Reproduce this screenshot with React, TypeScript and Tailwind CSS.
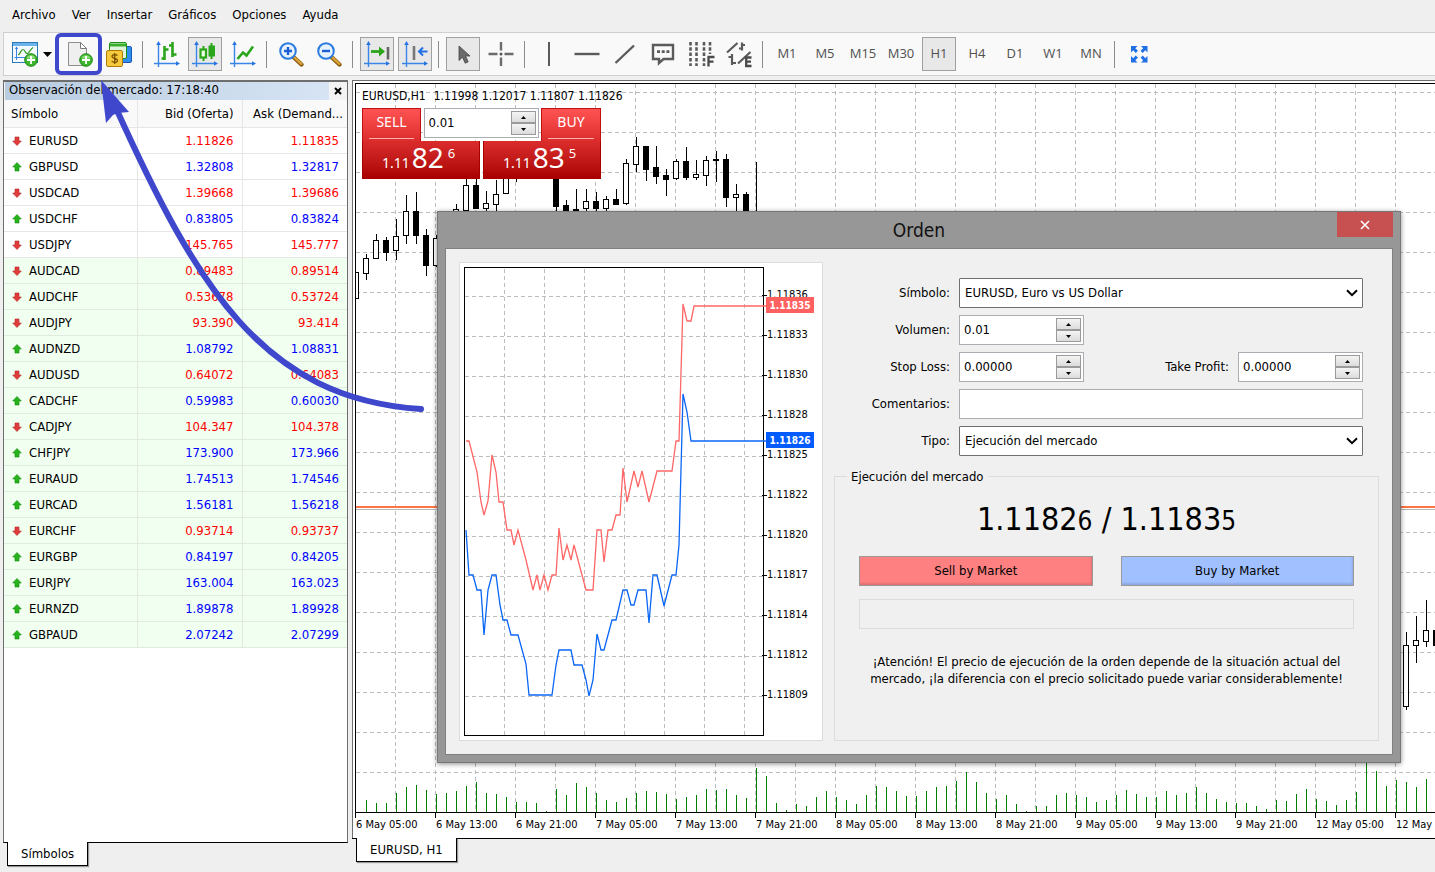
import type { ReactNode } from "react";

const quotes = [
  { symbol: "EURUSD", bid: "1.11826", ask: "1.11835", up: false },
  { symbol: "GBPUSD", bid: "1.32808", ask: "1.32817", up: true },
  { symbol: "USDCAD", bid: "1.39668", ask: "1.39686", up: false },
  { symbol: "USDCHF", bid: "0.83805", ask: "0.83824", up: true },
  { symbol: "USDJPY", bid: "145.765", ask: "145.777", up: false },
  { symbol: "AUDCAD", bid: "0.89483", ask: "0.89514", up: false },
  { symbol: "AUDCHF", bid: "0.53678", ask: "0.53724", up: false },
  { symbol: "AUDJPY", bid: "93.390", ask: "93.414", up: false },
  { symbol: "AUDNZD", bid: "1.08792", ask: "1.08831", up: true },
  { symbol: "AUDUSD", bid: "0.64072", ask: "0.64083", up: false },
  { symbol: "CADCHF", bid: "0.59983", ask: "0.60030", up: true },
  { symbol: "CADJPY", bid: "104.347", ask: "104.378", up: false },
  { symbol: "CHFJPY", bid: "173.900", ask: "173.966", up: true },
  { symbol: "EURAUD", bid: "1.74513", ask: "1.74546", up: true },
  { symbol: "EURCAD", bid: "1.56181", ask: "1.56218", up: true },
  { symbol: "EURCHF", bid: "0.93714", ask: "0.93737", up: false },
  { symbol: "EURGBP", bid: "0.84197", ask: "0.84205", up: true },
  { symbol: "EURJPY", bid: "163.004", ask: "163.023", up: true },
  { symbol: "EURNZD", bid: "1.89878", ask: "1.89928", up: true },
  { symbol: "GBPAUD", bid: "2.07242", ask: "2.07299", up: true },
];

// [slot, high, body top, body bottom, low, filled]
const candles: [number, number, number, number, number, boolean][] = [
  [0, 188, 188, 214, 214, false],
  [1, 170, 174, 189, 196, false],
  [2, 150, 156, 174, 175, false],
  [3, 153, 156, 168, 177, true],
  [4, 135, 152, 166, 176, false],
  [5, 111, 127, 151, 160, false],
  [6, 108, 127, 151, 160, true],
  [7, 145, 151, 181, 192, true],
  [8, 151, 154, 181, 183, false],
  [10, 120, 125, 135, 140, false],
  [11, 80, 101, 126, 130, false],
  [12, 80, 101, 124, 124, true],
  [13, 107, 119, 124, 130, false],
  [14, 96, 110, 120, 130, false],
  [15, 80, 86, 109, 109, false],
  [16, 70, 80, 92, 98, true],
  [17, 70, 80, 92, 94, true],
  [18, 70, 80, 92, 94, true],
  [20, 80, 84, 122, 127, true],
  [21, 116, 121, 126, 130, true],
  [22, 105, 125, 135, 135, true],
  [23, 105, 117, 124, 130, false],
  [24, 108, 117, 124, 130, true],
  [25, 112, 115, 124, 130, false],
  [26, 105, 115, 120, 121, true],
  [27, 75, 79, 119, 121, false],
  [28, 53, 62, 80, 88, false],
  [29, 62, 62, 85, 97, true],
  [30, 62, 83, 92, 100, true],
  [31, 85, 91, 95, 112, true],
  [32, 75, 77, 94, 96, false],
  [33, 63, 77, 93, 96, true],
  [34, 76, 90, 93, 96, false],
  [35, 72, 76, 91, 102, false],
  [36, 67, 75, 76, 98, true],
  [37, 70, 75, 113, 123, true],
  [38, 100, 110, 113, 130, false],
  [39, 108, 110, 140, 140, true],
  [105, 548, 561, 622, 626, false],
  [106, 532, 556, 561, 579, false],
  [107, 516, 546, 557, 563, false],
  [108, 546, 546, 561, 561, true],
];

const volumes = [
  12, 9, 9, 19, 25, 27, 22, 18, 19, 21, 26, 30, 19, 18, 15, 10, 10, 9, 1, 23,
  17, 29, 25, 19, 12, 10, 14, 19, 21, 20, 18, 13, 15, 17, 23, 22, 23, 17, 14,
  44, 36, 9, 2, 8, 6, 15, 21, 15, 12, 8, 17, 26, 25, 21, 16, 16, 21, 25, 26,
  31, 40, 30, 19, 13, 17, 8, 1, 6, 6, 17, 19, 17, 15, 10, 12, 17, 22, 18, 15,
  15, 21, 17, 19, 25, 19, 13, 10, 9, 9, 6, 3, 12, 11, 18, 23, 13, 11, 7, 12,
  20, 50, 41, 26, 32, 30, 25, 33,
];

const timeLabels = [
  "6 May 05:00",
  "6 May 13:00",
  "6 May 21:00",
  "7 May 05:00",
  "7 May 13:00",
  "7 May 21:00",
  "8 May 05:00",
  "8 May 13:00",
  "8 May 21:00",
  "9 May 05:00",
  "9 May 13:00",
  "9 May 21:00",
  "12 May 05:00",
  "12 May",
];

const tickLabels = [
  "1.11836",
  "1.11833",
  "1.11830",
  "1.11828",
  "1.11825",
  "1.11822",
  "1.11820",
  "1.11817",
  "1.11814",
  "1.11812",
  "1.11809",
];

const askLine =
  "2,174 5,174 13,205 17,235 20,248 24,234 28,188 32,205 35,235 39,235 43,263 47,263 50,278 54,263 62,293 69,323 73,308 76,323 80,308 84,323 88,308 92,308 95,261 99,293 103,278 107,293 110,278 122,323 129,323 133,263 137,263 140,295 144,263 148,263 152,248 156,248 159,201 163,235 170,204 174,220 178,204 185,235 193,204 208,204 212,174 215,174 219,37 223,54 227,54 230,39 302,39";
const bidLine =
  "2,263 5,308 9,308 13,323 17,323 20,368 24,323 28,308 32,308 36,338 39,353 43,353 47,368 54,368 62,397 65,428 88,428 92,398 95,383 107,383 110,398 118,398 122,413 125,429 129,413 133,367 137,383 140,383 148,353 152,353 159,323 163,323 167,338 170,338 174,323 182,323 185,356 189,308 193,308 200,339 208,308 212,308 215,278 219,127 223,145 227,174 302,174";

const menus = ["Archivo", "Ver", "Insertar", "Gráficos", "Opciones", "Ayuda"];
const timeframes = ["M1", "M5", "M15", "M30", "H1", "H4", "D1", "W1", "MN"];

export default function App() {
  return (
    <div className="relative flex min-h-screen flex-col overflow-hidden bg-[#efefef] font-['DejaVu_Sans_Condensed','Noto_Sans',sans-serif] text-[13px] text-black">
      <MenuBar />
      <Toolbar />
      <main className="flex flex-1 gap-1 pt-1 pl-[3px]">
        <MarketWatch />
        <ChartWindow />
      </main>
      <OrderDialog />
      <PointerArrow />
    </div>
  );
}

function MenuBar() {
  return (
    <nav className="flex h-8 items-center gap-4 px-3 pb-0.5">
      {menus.map((item) => (
        <button key={item} type="button">
          {item}
        </button>
      ))}
    </nav>
  );
}

/* ---------- Toolbar ---------- */

function ToolButton({
  label,
  active,
  children,
}: {
  label: string;
  active?: boolean;
  children: ReactNode;
}) {
  return (
    <button
      type="button"
      aria-label={label}
      className={
        active
          ? "flex size-[34px] shrink-0 items-center justify-center bg-[#e8e8e8] outline -outline-offset-1 outline-[#a0a0a0]"
          : "flex size-[34px] shrink-0 items-center justify-center"
      }>
      {children}
    </button>
  );
}

function Icon({ children }: { children: ReactNode }) {
  return (
    <svg viewBox="0 0 34 34" className="size-[34px]" fill="none">
      {children}
    </svg>
  );
}

function Separator() {
  return <span className="mx-0.5 h-[27px] w-0.5 shrink-0 border-l border-[#8c8c8c]" />;
}

function Axes() {
  return (
    <g>
      <path d="M8.5 7v23M4 26.5h24" stroke="#3a86e8" strokeWidth="1.4" />
      <path d="M8.5 4l2.3 4H6.2zM30 26.5l-4 2.3v-4.600z" fill="#2673e0" />
    </g>
  );
}

function PlusBadge({ cx, cy }: { cx: number; cy: number }) {
  return (
    <g transform={`translate(${cx} ${cy})`}>
      <circle r="6.300" fill="#3fb52d" stroke="#1d8a14" />
      <path d="M-4.500-1.500a4.800 4.800 0 0 1 9 0z" fill="#8bdc7a" />
      <path d="M-4 0h8M0-4v8" stroke="#fff" strokeWidth="1.800" />
    </g>
  );
}

function Magnifier({ plus }: { plus?: boolean }) {
  return (
    <Icon>
      <path d="M20 20.500l7.500 7" stroke="#8a5a10" strokeWidth="4.400" strokeLinecap="round" />
      <path d="M20.500 20.500l6.800 6.300" stroke="#d9a13a" strokeWidth="2.400" strokeLinecap="round" />
      <circle cx="14" cy="14" r="7.800" fill="#e6f3ff" stroke="#2b7ae0" strokeWidth="2" />
      <path d={plus ? "M10 14h8M14 10v8" : "M10 14h8"} stroke="#1b5fd0" strokeWidth="2.400" />
    </Icon>
  );
}

function Toolbar() {
  return (
    <div className="ml-[3px] flex h-11 items-center gap-1 border border-r-0 border-[#cfcfcf] bg-[#f9f9f9] pl-1">
      <button type="button" aria-label="Nuevo gráfico" className="flex items-center">
        <Icon>
          <rect x="4.500" y="5.500" width="25" height="20" fill="#f4faff" stroke="#2a7ab8" />
          <path d="M5 7.500h24" stroke="#6db4ea" strokeWidth="3" />
          <path d="M8.500 11v12M6.500 20.500h18" stroke="#3a86e8" />
          <path d="M8.500 9.500l1.500 2.500H7zM27 20.500l-2.500 1.500v-3z" fill="#2673e0" />
          <path d="M10 17.500c2 1 2.500-5 5-5s2 4 4 4 3-4 6-6" stroke="#2f9a20" strokeWidth="1.200" />
          <PlusBadge cx={23} cy={23} />
        </Icon>
        <svg viewBox="0 0 9 5" className="ml-px h-[5px] w-[9px]">
          <path d="M0 0h9L4.500 5z" />
        </svg>
      </button>
      <div className="-ml-px flex h-[42px] w-[47px] shrink-0 items-center justify-center rounded-[6px] border-4 border-[#3f48cc]">
        <ToolButton label="Nueva orden">
          <Icon>
            <path d="M6.500 5.500h12l6 6v17h-18z" fill="#efefef" stroke="#8e8e8e" />
            <path d="M18.500 5.500v6h6z" fill="#fff" stroke="#7a7a7a" />
            <PlusBadge cx={24} cy={23} />
          </Icon>
        </ToolButton>
      </div>
      <div className="-ml-1 flex">
        <ToolButton label="Cuentas">
          <Icon>
            <rect x="12.500" y="9.500" width="17" height="16" rx="1.500" fill="#2f8ff0" stroke="#1c58b0" />
            <rect x="7.500" y="5.500" width="17" height="16" rx="1.500" fill="#dff5dc" stroke="#1f8f1a" />
            <path d="M8 8h16" stroke="#38b02d" strokeWidth="3" />
            <rect x="4.500" y="13.500" width="16" height="16" rx="1.500" fill="#f7c93c" stroke="#b07c08" />
            <path
              d="M15.500 18.500c-1-1.300-5.500-1.500-5.500 1s5.500 1.500 5.500 4-4.500 2.300-5.800.7M12.700 16v11"
              stroke="#7a5200"
              strokeWidth="1.300"
            />
          </Icon>
        </ToolButton>
      </div>
      <Separator />
      <ToolButton label="Gráfico de barras">
        <Icon>
          <Axes />
          <path d="M14.500 9v14M11.500 21.500h3M14.500 12.500h4M22.500 5v15M19 8.500h3.500M22.500 17.500h4" stroke="#2ba51a" strokeWidth="2.600" />
        </Icon>
      </ToolButton>
      <ToolButton label="Gráfico de velas" active>
        <Icon>
          <Axes />
          <path d="M15.500 9v15M23.500 6v16" stroke="#2ba51a" strokeWidth="2" />
          <rect x="12.500" y="12.500" width="5.500" height="8" fill="#e8ffe0" stroke="#2ba51a" strokeWidth="2.200" />
          <rect x="20.500" y="8.500" width="6.500" height="11" fill="#2ba51a" />
        </Icon>
      </ToolButton>
      <ToolButton label="Gráfico de líneas">
        <Icon>
          <Axes />
          <path d="M11.500 22l5.500-6.500 3.500 3L27 9.500" stroke="#2ba51a" strokeWidth="2.600" />
        </Icon>
      </ToolButton>
      <Separator />
      <ToolButton label="Acercar">
        <Magnifier plus />
      </ToolButton>
      <ToolButton label="Alejar">
        <Magnifier />
      </ToolButton>
      <Separator />
      <ToolButton label="Desplazamiento automático" active>
        <Icon>
          <Axes />
          <path d="M11 14.500h10" stroke="#2ba51a" strokeWidth="2.800" />
          <path d="M19 9.500v10l6-5z" fill="#2ba51a" />
          <path d="M28 10v12.500" stroke="#666" strokeWidth="2.600" />
        </Icon>
      </ToolButton>
      <ToolButton label="Desplazar gráfico" active>
        <Icon>
          <Axes />
          <path d="M16 9v14" stroke="#777" strokeWidth="2.600" />
          <path d="M21 14.500h8.500M25 10.500l-4 4 4 4" stroke="#1f6fe5" strokeWidth="2" />
        </Icon>
      </ToolButton>
      <Separator />
      <ToolButton label="Cursor" active>
        <Icon>
          <path d="M13 9v14.500l3.500-3.300 2.700 6 3-1.400-2.700-5.800H24z" fill="#6a6a6a" stroke="#444" strokeWidth=".8" />
        </Icon>
      </ToolButton>
      <ToolButton label="Cruz">
        <Icon>
          <path d="M17 5v8.500M17 20.500V29M4.500 17h9M20.500 17h9" stroke="#6b6b6b" strokeWidth="2.400" />
          <circle cx="17" cy="17" r="1.500" fill="#555" />
        </Icon>
      </ToolButton>
      <Separator />
      <ToolButton label="Línea vertical">
        <Icon>
          <path d="M17 5v24" stroke="#5a5a5a" strokeWidth="2" />
        </Icon>
      </ToolButton>
      <ToolButton label="Línea horizontal">
        <Icon>
          <path d="M4.500 17h25" stroke="#5a5a5a" strokeWidth="2.400" />
        </Icon>
      </ToolButton>
      <ToolButton label="Línea de tendencia">
        <Icon>
          <path d="M7.500 26L26 8.500" stroke="#5a5a5a" strokeWidth="2.400" />
        </Icon>
      </ToolButton>
      <ToolButton label="Etiqueta de texto">
        <Icon>
          <path d="M7 8h20v14H17.500L13 26v-4H7z" stroke="#5a5a5a" strokeWidth="2.400" />
          <path d="M11 14.700h3M15.700 14.700h3M20.400 14.700h3" stroke="#5a5a5a" strokeWidth="2.800" />
        </Icon>
      </ToolButton>
      <ToolButton label="Fibonacci">
        <Icon>
          <path d="M6.500 5v24M12.500 5v24M20 5v24M26 5v12" stroke="#5a5a5a" strokeWidth="2.600" strokeDasharray="3.500 1.800" />
          <path d="M24.500 29.500v-9.500h6M24.500 24.700h5" stroke="#4a4a4a" strokeWidth="2.300" />
        </Icon>
      </ToolButton>
      <ToolButton label="Canal equidistante">
        <Icon>
          <path
            d="M5 15.500L15.500 6M16 26.500L28.500 15M20 5.500v8M17 11.500h3M20 8h3M10 17v11M6.500 20h3.500M10 26h4"
            stroke="#5a5a5a"
            strokeWidth="2.200"
          />
          <path d="M29.500 20.500h-5.300v8.500h5.300M24.500 24.700h4.500" stroke="#4a4a4a" strokeWidth="2.300" />
        </Icon>
      </ToolButton>
      <Separator />
      {timeframes.map((tf) => (
        <ToolButton key={tf} label={tf} active={tf === "H1"}>
          <span className="font-['Open_Sans',sans-serif] text-[13px] text-[#505050]">{tf}</span>
        </ToolButton>
      ))}
      <Separator />
      <ToolButton label="Pantalla completa">
        <Icon>
          <g fill="#1f6fe5">
            <path d="M9 9h6.500L13.300 11.200l2.600 2.600-2.100 2.100-2.600-2.600L9 15.500z" />
            <path d="M25.500 9H19l2.200 2.200-2.600 2.600 2.100 2.100 2.600-2.600 2.200 2.200z" />
            <path d="M9 25.500h6.500l-2.200-2.200 2.600-2.600-2.100-2.100-2.600 2.600L9 19z" />
            <path d="M25.500 25.500H19l2.200-2.200-2.600-2.600 2.100-2.100 2.600 2.600 2.200-2.200z" />
          </g>
        </Icon>
      </ToolButton>
    </div>
  );
}

/* ---------- Market watch ---------- */

function DirectionArrow({ up }: { up: boolean }) {
  return (
    <svg viewBox="0 0 10 10" className="size-[10px] shrink-0">
      {up ? (
        <path d="M5 .5L9.300 5H7v4H3V5H.7z" fill="#27b31b" stroke="#128a0a" strokeWidth=".6" />
      ) : (
        <path d="M5 9.500L.7 5H3V1h4v4h2.300z" fill="#e03c3c" stroke="#b52222" strokeWidth=".6" />
      )}
    </svg>
  );
}

function MarketWatch() {
  return (
    <section className="flex w-[345px] shrink-0 flex-col pb-1.5">
      <div className="flex-1 border border-t-2 border-[#6e6e6e] border-b-black bg-white">
        <div className="flex h-[18px] items-center bg-[#f3f3f3] pl-px">
          <h2 className="h-full flex-1 bg-linear-to-r from-[#b8cbdf] to-[#d6e4f4] pl-1 leading-4">
            Observación del mercado: 17:18:40
          </h2>
          <button type="button" aria-label="Cerrar" className="flex w-[18px] justify-center">
            <svg viewBox="0 0 8 8" className="size-2">
              <path d="M1 1l6 6M7 1L1 7" stroke="#000" strokeWidth="2" />
            </svg>
          </button>
        </div>
        <table className="w-full table-fixed border-collapse">
          <colgroup>
            <col className="w-[133px]" />
            <col className="w-[105px]" />
            <col />
          </colgroup>
          <thead>
            <tr className="h-[27px] border-b border-[#e6e6e6] bg-[#f9f9f9]">
              <th className="border-r border-[#e6e6e6] pl-[7px] text-left font-normal">Símbolo</th>
              <th className="border-r border-[#e6e6e6] pr-2 text-right font-normal">
                Bid (Oferta)
              </th>
              <th className="pr-1 text-right font-normal whitespace-nowrap">Ask (Demand...</th>
            </tr>
          </thead>
          <tbody>
            {quotes.map((q, i) => (
              <tr
                key={q.symbol}
                className={
                  i < 5
                    ? "h-[26px] border-b border-[#e6e6e6]"
                    : "h-[26px] border-b border-[#e0ebe0] bg-[#f0fff0]"
                }>
                <td className="border-r border-[#e3e8e3] pt-0.5 pl-2">
                  <div className="flex items-center gap-[7px]">
                    <DirectionArrow up={q.up} />
                    {q.symbol}
                  </div>
                </td>
                <td
                  className={
                    q.up
                      ? "border-r border-[#e3e8e3] pt-0.5 pr-2 text-right text-[#0000ff]"
                      : "border-r border-[#e3e8e3] pt-0.5 pr-2 text-right text-[#ff0000]"
                  }>
                  {q.bid}
                </td>
                <td
                  className={
                    q.up
                      ? "pt-0.5 pr-2 text-right text-[#0000ff]"
                      : "pt-0.5 pr-2 text-right text-[#ff0000]"
                  }>
                  {q.ask}
                </td>
              </tr>
            ))}
          </tbody>
        </table>
      </div>
      <div className="-mt-px ml-1 self-start border border-t-0 border-black bg-white px-[13px] pt-0.5 pb-0.5 shadow-[1px_1px_1px_#999]">
        Símbolos
      </div>
    </section>
  );
}

/* ---------- Main chart ---------- */

function PriceChart() {
  return (
    <svg width="100%" height="100%" className="absolute inset-0" shapeRendering="crispEdges">
      {Array.from({ length: 28 }, (_, i) => (
        <line
          key={i}
          x1={39.5 + i * 40}
          x2={39.5 + i * 40}
          y1="0"
          y2="100%"
          stroke="#bdbdbd"
          strokeDasharray="4 3"
        />
      ))}
      {Array.from({ length: 18 }, (_, i) => (
        <line
          key={i}
          x1="0"
          x2="100%"
          y1={8.5 + i * 40}
          y2={8.5 + i * 40}
          stroke="#bdbdbd"
          strokeDasharray="4 3"
        />
      ))}
      <line x1="0" x2="100%" y1="425.5" y2="425.5" stroke="#b5b5b5" />
      <line x1="0" x2="100%" y1="423" y2="423" stroke="#ff7444" strokeWidth="2" />
      {candles.map(([slot, high, top, bottom, low, filled]) => (
        <g key={slot} stroke="#000">
          <line x1={slot * 10 + 0.5} x2={slot * 10 + 0.5} y1={high} y2={low} />
          <rect
            x={slot * 10 - 2.5}
            y={top + 0.5}
            width="5"
            height={bottom - top}
            fill={filled ? "#000" : "#fff"}
          />
        </g>
      ))}
      <line x1="400.5" x2="400.5" y1="78" y2="140" stroke="#000" />
      {volumes.map((v, i) => (
        <line
          key={i}
          x1={10.5 + i * 10}
          x2={10.5 + i * 10}
          y1={728 - v}
          y2="728"
          stroke="#008000"
        />
      ))}
    </svg>
  );
}

function QuickTrade() {
  return (
    <div className="w-[239px] text-white">
      <div className="flex h-[33px] items-start justify-between">
        <button
          type="button"
          className="h-full w-[59px] border border-b-0 border-[#c01010] bg-linear-to-b from-[#ff5252] to-[#dc2c2c] px-1.5 font-['Noto_Sans',sans-serif] text-sm">
          <span className="block border-b border-[#ffb0b0] pb-1.5">SELL</span>
        </button>
        <div className="flex h-[30px] w-[115px] border border-[#a9adb3] bg-white">
          <SpinBox label="Volumen rápido" value="0.01" />
        </div>
        <button
          type="button"
          className="h-full w-[60px] border border-b-0 border-[#c01010] bg-linear-to-b from-[#ff5252] to-[#dc2c2c] px-1.5 font-['Noto_Sans',sans-serif] text-sm">
          <span className="block border-b border-[#ffb0b0] pb-1.5">BUY</span>
        </button>
      </div>
      <div className="flex h-[38px] justify-between font-['Noto_Sans',sans-serif]">
        <PriceTile small="1.11" big="82" pip="6" />
        <PriceTile small="1.11" big="83" pip="5" />
      </div>
    </div>
  );
}

function PriceTile({ small, big, pip }: { small: string; big: string; pip: string }) {
  return (
    <button
      type="button"
      className="flex w-[118px] items-baseline border border-t-0 border-[#a80000] bg-linear-to-b from-[#dc2c2c] to-[#a80000] pl-[19px] leading-9">
      <span className="text-sm">{small}</span>
      <span className="ml-0.5 text-[28px] leading-8">{big}</span>
      <span className="ml-1 self-start text-[13px] leading-6">{pip}</span>
    </button>
  );
}

function ChartWindow() {
  return (
    <section className="flex min-w-0 flex-1 flex-col pb-2.5">
      <div className="flex flex-1 flex-col border-t border-l border-[#6e6e6e] bg-white pt-0.5 pl-0.5">
        <div className="relative flex-1 overflow-hidden border border-r-0 border-black">
          <PriceChart />
          <div className="relative pt-1 pl-1.5">
            <p className="mb-1 flex h-4 items-center gap-2 text-xs">
              <span>EURUSD,H1</span>
              <span>1.11998 1.12017 1.11807 1.11826</span>
            </p>
            <QuickTrade />
          </div>
        </div>
        <div className="flex h-[25px] overflow-hidden text-[11px]">
          {timeLabels.map((label) => (
            <div key={label} className="flex w-20 shrink-0 whitespace-nowrap">
              <span className="h-[5px] w-px bg-black" />
              <span className="pt-1">{label}</span>
            </div>
          ))}
        </div>
      </div>
      <div className="border-t border-black" />
      <div className="-mt-px ml-1 self-start border border-t-0 border-black bg-white px-[13px] pt-0.5 pb-0.5 shadow-[1px_1px_1px_#999]">
        EURUSD, H1
      </div>
    </section>
  );
}

/* ---------- Order dialog ---------- */

function SpinBox({ id, label, value }: { id?: string; label?: string; value: string }) {
  return (
    <>
      <input
        id={id}
        aria-label={label}
        defaultValue={value}
        className="min-w-0 flex-1 bg-transparent pl-1 text-black outline-none"
      />
      <span className="my-0.5 mr-0.5 flex w-[25px] flex-col">
        <button
          type="button"
          aria-label="Subir"
          className="flex flex-1 items-center justify-center border border-[#9a9a9a] bg-linear-to-b from-[#f4f4f4] to-[#dcdcdc]">
          <svg viewBox="0 0 5 3" className="h-[3px] w-[5px]">
            <path d="M0 3h5L2.500 0z" />
          </svg>
        </button>
        <button
          type="button"
          aria-label="Bajar"
          className="flex flex-1 items-center justify-center border border-[#9a9a9a] bg-linear-to-b from-[#f4f4f4] to-[#dcdcdc]">
          <svg viewBox="0 0 5 3" className="h-[3px] w-[5px]">
            <path d="M0 0h5L2.500 3z" />
          </svg>
        </button>
      </span>
    </>
  );
}

function SelectBox({ id, value }: { id: string; value: string }) {
  return (
    <div className="relative flex-1">
      <select
        id={id}
        className="h-[30px] w-full appearance-none rounded-[1px] border border-[#707070] bg-white pl-[5px]">
        <option>{value}</option>
      </select>
      <svg
        viewBox="0 0 12 8"
        className="pointer-events-none absolute top-[11px] right-[5px] h-2 w-3"
        fill="none">
        <path d="M1 1.200l5 5 5-5" stroke="#000" strokeWidth="2" />
      </svg>
    </div>
  );
}

function TickChart() {
  return (
    <div className="w-[364px] shrink-0 border border-[#dcdcdc] bg-white p-1">
      <svg viewBox="0 0 354 469" className="h-[469px] w-[354px]">
        <g shapeRendering="crispEdges" stroke="#bdbdbd" strokeDasharray="4 3">
          {Array.from({ length: 7 }, (_, i) => (
            <line key={i} x1={40.5 + i * 40} x2={40.5 + i * 40} y1="2" y2="468" />
          ))}
          {tickLabels.map((label, i) => (
            <line key={label} x1="1" x2="299" y1={29.5 + i * 40} y2={29.5 + i * 40} />
          ))}
        </g>
        <g shapeRendering="crispEdges" stroke="#000">
          <rect x="0.5" y="0.5" width="299" height="468" fill="none" />
          {tickLabels.map((label, i) => (
            <line key={label} x1="298" x2="303" y1={28.5 + i * 40} y2={28.5 + i * 40} />
          ))}
        </g>
        {tickLabels.map((label, i) => (
          <text key={label} x="303" y={31 + i * 40} className="text-[11px]">
            {label}
          </text>
        ))}
        <polyline points={askLine} fill="none" stroke="#ff6666" strokeWidth="1.300" />
        <polyline points={bidLine} fill="none" stroke="#0a66f5" strokeWidth="1.300" />
        <rect x="302" y="30" width="48" height="16" fill="#ff6060" />
        <rect x="302" y="165" width="48" height="16" fill="#005cff" />
        <g className="text-[10px] font-bold" fill="#fff" textAnchor="middle">
          <text x="326" y="42">1.11835</text>
          <text x="326" y="177">1.11826</text>
        </g>
      </svg>
    </div>
  );
}

function OrderDialog() {
  return (
    <div
      role="dialog"
      aria-label="Orden"
      className="absolute top-[211px] right-[34px] left-[437px] border border-[#777] bg-[#979797] px-[7px] pb-[7px] shadow-[0_1px_5px_rgba(0,0,0,0.45)]">
      <header className="relative flex h-9 items-center justify-center text-[#111]">
        <h1 className="text-[19px]">Orden</h1>
        <button
          type="button"
          aria-label="Cerrar"
          className="absolute top-0 right-0 flex h-[25px] w-14 items-center justify-center bg-[#c75050]">
          <svg viewBox="0 0 10 10" className="size-[10px]">
            <path d="M1 1l8 8M9 1L1 9" stroke="#fff" strokeWidth="1.600" />
          </svg>
        </button>
      </header>
      <div className="flex gap-[11px] border border-[#808080] bg-[#f0f0f0] px-[13px] py-[13px]">
        <TickChart />
        <div className="flex min-w-0 flex-1 flex-col">
          <form className="flex flex-col gap-[7px] pt-4 pr-4">
            <div className="flex items-center">
              <label htmlFor="symbol" className="w-[116px] shrink-0 text-right">
                Símbolo:
              </label>
              <span className="w-[9px]" />
              <SelectBox id="symbol" value="EURUSD, Euro vs US Dollar" />
            </div>
            <div className="flex items-center">
              <label htmlFor="volume" className="w-[116px] shrink-0 text-right">
                Volumen:
              </label>
              <span className="w-[9px]" />
              <div className="flex h-[30px] w-[125px] border border-[#abadb3] bg-white">
                <SpinBox id="volume" value="0.01" />
              </div>
            </div>
            <div className="flex items-center">
              <label htmlFor="stop-loss" className="w-[116px] shrink-0 text-right">
                Stop Loss:
              </label>
              <span className="w-[9px]" />
              <div className="flex h-[30px] w-[125px] border border-[#abadb3] bg-white">
                <SpinBox id="stop-loss" value="0.00000" />
              </div>
              <label htmlFor="take-profit" className="mr-[9px] ml-auto">
                Take Profit:
              </label>
              <div className="flex h-[30px] w-[125px] border border-[#abadb3] bg-white">
                <SpinBox id="take-profit" value="0.00000" />
              </div>
            </div>
            <div className="flex items-center">
              <label htmlFor="comment" className="w-[116px] shrink-0 text-right">
                Comentarios:
              </label>
              <span className="w-[9px]" />
              <input
                id="comment"
                className="h-[30px] min-w-0 flex-1 border border-[#abadb3] bg-white px-1"
              />
            </div>
            <div className="flex items-center">
              <label htmlFor="type" className="w-[116px] shrink-0 text-right">
                Tipo:
              </label>
              <span className="w-[9px]" />
              <SelectBox id="type" value="Ejecución del mercado" />
            </div>
          </form>
          <fieldset className="mt-[11px] flex-1 border border-[#dcdcdc] px-6">
            <legend className="-ml-3 px-1">Ejecución del mercado</legend>
            <p className="mt-3 text-center text-[32px] leading-10">
              1.1182<span className="text-[26px]">6</span> / 1.1183
              <span className="text-[26px]">5</span>
            </p>
            <div className="mt-[15px] flex gap-7">
              <button
                type="button"
                className="h-[30px] flex-1 border border-[#999] bg-[#ff8080] shadow-[inset_-1px_-2px_2px_rgba(0,0,0,0.12)]">
                Sell by Market
              </button>
              <button
                type="button"
                className="h-[30px] flex-1 border border-[#999] bg-[#a0c0ff] shadow-[inset_-1px_-2px_2px_rgba(0,0,0,0.12)]">
                Buy by Market
              </button>
            </div>
            <div className="mt-[13px] h-[30px] border border-[#dcdcdc]" />
            <p className="mt-6 text-center leading-[17px]">
              ¡Atención! El precio de ejecución de la orden depende de la situación actual del
              mercado, ¡la diferencia con el precio solicitado puede variar considerablemente!
            </p>
          </fieldset>
        </div>
      </div>
    </div>
  );
}

// Points from the order dialog to the "new order" button
function PointerArrow() {
  return (
    <svg
      viewBox="0 0 440 430"
      className="pointer-events-none absolute top-0 left-0 h-[430px] w-[440px]"
      fill="none">
      <path
        d="M421 409C262 399 196 285 115 106"
        stroke="#3f48cc"
        strokeWidth="6"
        strokeLinecap="round"
      />
      <path d="M101 80l28 32-11 1-5 2-7 8z" fill="#3f48cc" />
    </svg>
  );
}
